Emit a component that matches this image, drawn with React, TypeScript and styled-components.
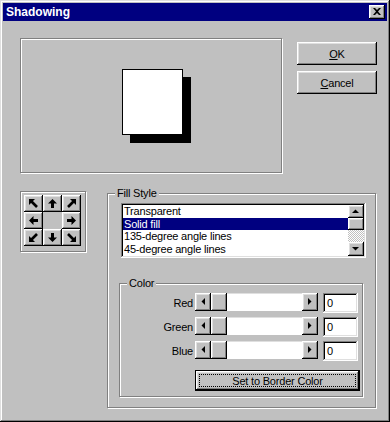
import React from "react";
import styled, { createGlobalStyle } from "styled-components";

const Global = createGlobalStyle`
  html, body { margin: 0; padding: 0; background: #c0c0c0; }
  body { font-family: "Liberation Sans", Arial, sans-serif; font-size: 11px; color: #000; }
  * { box-sizing: border-box; }
`;

const raised = `box-shadow: inset -1px -1px #000, inset 1px 1px #fff, inset -2px -2px #808080, inset 2px 2px #dfdfdf;`;
const sunken = `box-shadow: inset -1px -1px #fff, inset 1px 1px #808080, inset -2px -2px #dfdfdf, inset 2px 2px #000;`;
const etched = `border: 1px solid #808080; box-shadow: 1px 1px 0 #fff, inset 1px 1px 0 #fff;`;

const Window = styled.div`
  width: 390px;
  height: 422px;
  padding: 3px;
  background: #c0c0c0;
  box-shadow: inset -1px -1px #000, inset 1px 1px #dfdfdf, inset -2px -2px #808080, inset 2px 2px #fff;
  display: flex;
  flex-direction: column;
`;

const TitleBar = styled.div`
  height: 18px;
  background: #000080;
  color: #fff;
  font-weight: bold;
  font-size: 12px;
  display: flex;
  align-items: center;
  justify-content: space-between;
  padding: 0 2px 0 3px;
`;

const CloseButton = styled.div`
  width: 16px;
  height: 14px;
  background: #c0c0c0;
  ${raised}
  display: flex;
  align-items: center;
  justify-content: center;
  padding: 0 1px 1px 0;
`;

const Body = styled.div`
  display: flex;
  flex-direction: column;
  padding: 17px 0 0 17px;
`;

const TopRow = styled.div`
  display: flex;
  align-items: flex-start;
`;

const Preview = styled.div`
  width: 262px;
  height: 135px;
  ${etched}
  padding: 30px 0 0 101px;
`;

const Square = styled.div`
  width: 61px;
  height: 66px;
  background: #fff;
  border: 1px solid #000;
  box-shadow: 8px 8px 0 #000;
`;

const ButtonColumn = styled.div`
  margin: 4px 0 0 15px;
  display: flex;
  flex-direction: column;
  gap: 6px;
`;

const PushButton = styled.div`
  width: 80px;
  height: 23px;
  background: #c0c0c0;
  ${raised}
  display: flex;
  align-items: center;
  justify-content: center;
  letter-spacing: -0.2px;
`;

const Under = styled.span`
  text-decoration: underline;
`;

const BottomRow = styled.div`
  display: flex;
  align-items: flex-start;
  margin-top: 18px;
`;

const ArrowBox = styled.div`
  width: 66px;
  height: 61px;
  ${etched}
  padding: 3px 0 0 3px;
`;

const ArrowGrid = styled.div`
  display: grid;
  grid-template-columns: repeat(3, 19px);
  grid-auto-rows: 17px;
`;

const ArrowButton = styled.div`
  background: #c0c0c0;
  ${raised}
  display: flex;
  align-items: center;
  justify-content: center;
  padding: 0 1px 1px 0;
`;

const EmptyCell = styled.div``;

const Group = styled.div<{ $w: number; $h: number }>`
  position: relative;
  width: ${(p) => p.$w}px;
  height: ${(p) => p.$h}px;
  ${etched}
  display: flex;
  flex-direction: column;
  align-items: flex-start;
`;

const FillGroup = styled(Group)`
  margin: 2px 0 0 21px;
  padding: 9px 0 0 11px;
`;

const ColorGroup = styled(Group)`
  margin-top: 25px;
  padding: 9px 0 0 0;
`;

const Legend = styled.span`
  position: absolute;
  top: -7px;
  left: 7px;
  padding: 0 2px;
  line-height: 13px;
  background: #c0c0c0;
  letter-spacing: -0.2px;
`;

const ListBox = styled.div`
  margin-left: 2px;
  width: 245px;
  height: 55px;
  background: #fff;
  ${sunken}
  padding: 2px;
  display: flex;
`;

const ListItems = styled.div`
  flex: 1;
  overflow: hidden;
`;

const ListItem = styled.div<{ $selected?: boolean }>`
  height: 12.5px;
  line-height: 12px;
  padding-left: 1px;
  white-space: nowrap;
  letter-spacing: -0.2px;
  background: ${(p) => (p.$selected ? "#000080" : "transparent")};
  color: ${(p) => (p.$selected ? "#fff" : "#000")};
`;

const VScroll = styled.div`
  width: 16px;
  display: flex;
  flex-direction: column;
`;

const ScrollButton = styled.div<{ $size: number; $vertical?: boolean }>`
  ${(p) => (p.$vertical ? `height: ${p.$size}px;` : `width: ${p.$size}px;`)}
  flex: none;
  background: #c0c0c0;
  ${raised}
  display: flex;
  align-items: center;
  justify-content: center;
  padding: 0 1px 1px 0;
`;

const DitherTrack = styled.div`
  flex: 1;
  background: repeating-conic-gradient(#fff 0 25%, #c0c0c0 0 50%) 0 0 / 2px 2px;
`;

const ColorRow = styled.div`
  display: flex;
  align-items: flex-start;
  height: 20px;
  margin-bottom: 4px;
`;

const RowLabel = styled.span`
  width: 73px;
  margin-right: 2px;
  line-height: 21px;
  text-align: right;
  letter-spacing: -0.2px;
`;

const HScroll = styled.div`
  width: 123px;
  height: 18px;
  display: flex;
`;

const WhiteTrack = styled.div`
  flex: 1;
  background: #fff;
  border-top: 1px solid #dfdfdf;
`;

const EditBox = styled.div`
  margin-left: 5px;
  width: 35px;
  height: 20px;
  background: #fff;
  ${sunken}
  padding: 0 0 0 4px;
  line-height: 20px;
`;

const DefaultButton = styled.div`
  margin: 5px 0 0 75px;
  width: 165px;
  height: 21px;
  border: 1px solid #000;
  background: #c0c0c0;
  ${raised}
  padding: 3px;
  display: flex;
`;

const FocusRect = styled.div`
  flex: 1;
  border: 1px dotted #000;
  display: flex;
  align-items: center;
  justify-content: center;
  letter-spacing: -0.2px;
`;

const Tri = ({ dir }: { dir: "up" | "down" | "left" | "right" }) => {
  const pts: Record<string, string> = {
    up: "0,4 7,4 3.5,0.5",
    down: "0,0 7,0 3.5,3.5",
    left: "4,0 4,7 0.5,3.5",
    right: "0,0 0,7 3.5,3.5",
  };
  const vert = dir === "up" || dir === "down";
  return (
    <svg width={vert ? 7 : 4} height={vert ? 4 : 7} viewBox={vert ? "0 0 7 4" : "0 0 4 7"}>
      <polygon points={pts[dir]} fill="#000" />
    </svg>
  );
};

const Arrow = ({ rot }: { rot: number }) => (
  <svg width="11" height="11" viewBox="0 0 11 11">
    <g transform={`rotate(${rot} 5.5 5.5)`}>
      <polygon points="5.5,1 10,5.5 7,5.5 7,10 4,10 4,5.5 1,5.5" fill="#000" />
    </g>
  </svg>
);

const DiagArrow = ({ rot }: { rot: number }) => (
  <svg width="11" height="11" viewBox="0 0 11 11">
    <g transform={`rotate(${rot} 5.5 5.5)`}>
      <polygon points="1,1 7,1 1,7" fill="#000" />
      <line x1="3" y1="3" x2="9" y2="9" stroke="#000" strokeWidth="2.6" />
    </g>
  </svg>
);

const CloseX = () => (
  <svg width="8" height="7" viewBox="0 0 8 7">
    <path d="M0 0h2l2 2 2-2h2L5 3.5 8 7H6L4 5 2 7H0l3-3.5z" fill="#000" />
  </svg>
);

const ColorSlider = ({ label }: { label: string }) => (
  <ColorRow>
    <RowLabel>{label}</RowLabel>
    <HScroll>
      <ScrollButton $size={16}>
        <Tri dir="left" />
      </ScrollButton>
      <ScrollButton $size={16} />
      <WhiteTrack />
      <ScrollButton $size={16}>
        <Tri dir="right" />
      </ScrollButton>
    </HScroll>
    <EditBox>0</EditBox>
  </ColorRow>
);

export default function App() {
  const items = ["Transparent", "Solid fill", "135-degree angle lines", "45-degree angle lines"];
  return (
    <>
      <Global />
      <Window>
        <TitleBar>
          <span>Shadowing</span>
          <CloseButton>
            <CloseX />
          </CloseButton>
        </TitleBar>
        <Body>
          <TopRow>
            <Preview>
              <Square />
            </Preview>
            <ButtonColumn>
              <PushButton>
                <Under>O</Under>K
              </PushButton>
              <PushButton>
                <Under>C</Under>ancel
              </PushButton>
            </ButtonColumn>
          </TopRow>
          <BottomRow>
            <ArrowBox>
              <ArrowGrid>
                <ArrowButton><DiagArrow rot={0} /></ArrowButton>
                <ArrowButton><Arrow rot={0} /></ArrowButton>
                <ArrowButton><DiagArrow rot={90} /></ArrowButton>
                <ArrowButton><Arrow rot={-90} /></ArrowButton>
                <EmptyCell />
                <ArrowButton><Arrow rot={90} /></ArrowButton>
                <ArrowButton><DiagArrow rot={-90} /></ArrowButton>
                <ArrowButton><Arrow rot={180} /></ArrowButton>
                <ArrowButton><DiagArrow rot={180} /></ArrowButton>
              </ArrowGrid>
            </ArrowBox>
            <FillGroup $w={269} $h={215}>
              <Legend>Fill Style</Legend>
              <ListBox>
                <ListItems>
                  {items.map((t, i) => (
                    <ListItem key={t} $selected={i === 1}>
                      {t}
                    </ListItem>
                  ))}
                </ListItems>
                <VScroll>
                  <ScrollButton $vertical $size={13}>
                    <Tri dir="up" />
                  </ScrollButton>
                  <ScrollButton $vertical $size={12} />
                  <DitherTrack />
                  <ScrollButton $vertical $size={14}>
                    <Tri dir="down" />
                  </ScrollButton>
                </VScroll>
              </ListBox>
              <ColorGroup $w={244} $h={114}>
                <Legend>Color</Legend>
                <ColorSlider label="Red" />
                <ColorSlider label="Green" />
                <ColorSlider label="Blue" />
                <DefaultButton>
                  <FocusRect>Set to Border Color</FocusRect>
                </DefaultButton>
              </ColorGroup>
            </FillGroup>
          </BottomRow>
        </Body>
      </Window>
    </>
  );
}
